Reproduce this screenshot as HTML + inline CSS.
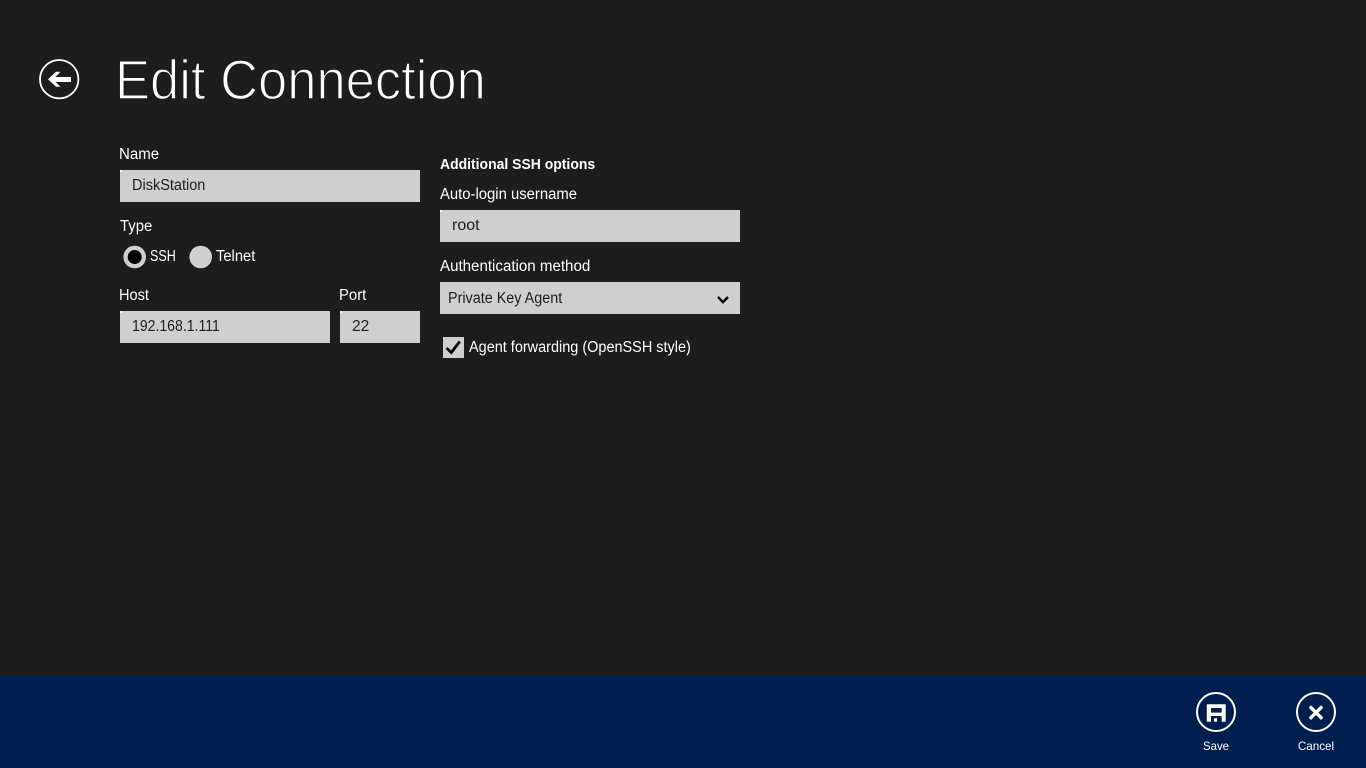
<!DOCTYPE html>
<html lang="en">
<head>
<meta charset="utf-8">
<title>Edit Connection</title>
<style>
html,body{margin:0;padding:0;width:1366px;height:768px;overflow:hidden;background:#1d1d1d;}
body{position:relative;font-family:"Liberation Sans",sans-serif;color:#fff;}
.t{position:absolute;white-space:nowrap;font-size:15.5px;line-height:20px;transform-origin:0 50%;}
.box{position:absolute;background:#cfcfcf;height:32px;}
.box.i::before{content:"";position:absolute;left:0;top:0;width:2px;height:2px;background:#f4f4f4;}
.d{color:#1d1d1d;}
#title{position:absolute;left:115px;top:45px;font-size:56px;line-height:70px;white-space:nowrap;transform-origin:0 50%;transform:scaleX(.938);color:#fff;-webkit-text-stroke:1.4px #1d1d1d;}
#bar{position:absolute;left:0;top:675px;width:1366px;height:93px;background:#001e4e;}
svg{position:absolute;overflow:visible;}
.lab{position:absolute;font-size:12px;line-height:16px;text-align:center;width:80px;}
</style>
</head>
<body>
<svg style="left:39px;top:59px" width="42" height="42" viewBox="0 0 42 42">
<circle cx="20.2" cy="20.2" r="19.2" fill="none" stroke="#fff" stroke-width="1.8"/>
<path d="M9 20.3 L17 12.8 H21.5 L16.5 18 H32 V23 H16.5 L21.5 27.8 H17 Z" fill="#fff"/>
</svg>
<div id="title">Edit Connection</div>

<div class="t" style="left:119px;top:145px;transform:scaleX(.97)">Name</div>
<div class="box i" style="left:120px;top:170px;width:300px"></div>
<div class="t d" style="left:132px;top:176px;transform:scaleX(.936)">DiskStation</div>

<div class="t" style="left:120px;top:217px;transform:scaleX(.96)">Type</div>
<svg style="left:123px;top:245px" width="24" height="24" viewBox="0 0 24 24">
<circle cx="11.7" cy="12" r="11.3" fill="#cfcfcf"/>
<circle cx="11.7" cy="12" r="7" fill="#000"/>
</svg>
<div class="t" style="left:150px;top:247px;transform:scaleX(.81)">SSH</div>
<svg style="left:189px;top:245px" width="24" height="24" viewBox="0 0 24 24">
<circle cx="11.7" cy="12" r="11.3" fill="#cfcfcf"/>
</svg>
<div class="t" style="left:216px;top:247px;transform:scaleX(.95)">Telnet</div>

<div class="t" style="left:119px;top:286px;transform:scaleX(.94)">Host</div>
<div class="box i" style="left:120px;top:311px;width:210px"></div>
<div class="t d" style="left:132px;top:317px;transform:scaleX(.907)">192.168.1.111</div>
<div class="t" style="left:339px;top:286px;transform:scaleX(.96)">Port</div>
<div class="box i" style="left:340px;top:311px;width:80px"></div>
<div class="t d" style="left:352px;top:317px">22</div>

<div class="t" style="left:440px;top:155px;font-weight:bold;font-size:14.5px;transform:scaleX(.963)">Additional SSH options</div>
<div class="t" style="left:440px;top:185px;transform:scaleX(.958)">Auto-login username</div>
<div class="box i" style="left:440px;top:210px;width:300px"></div>
<div class="t d" style="left:452px;top:216px;transform:scaleX(1.03)">root</div>
<div class="t" style="left:440px;top:257px;transform:scaleX(.974)">Authentication method</div>
<div class="box" style="left:440px;top:282px;width:300px"></div>
<div class="t d" style="left:448px;top:289px;transform:scaleX(.927)">Private Key Agent</div>
<svg style="left:717px;top:296px" width="13" height="9" viewBox="0 0 13 9">
<path d="M1 1 L6 6.2 L11 1" fill="none" stroke="#000" stroke-width="2.4"/>
</svg>
<svg style="left:443px;top:337px" width="21" height="21" viewBox="0 0 21 21">
<rect width="21" height="21" fill="#cfcfcf"/>
<path d="M3.5 11 L8.3 15.5 L16.8 4.5" fill="none" stroke="#000" stroke-width="2.8"/>
</svg>
<div class="t" style="left:469px;top:338px;transform:scaleX(.933)">Agent forwarding (OpenSSH style)</div>

<div id="bar"></div>
<svg style="left:1196px;top:692px" width="40" height="40" viewBox="0 0 40 40">
<circle cx="20" cy="20" r="19" fill="none" stroke="#fff" stroke-width="2"/>
<path fill-rule="evenodd" fill="#fff" d="M10.8 12.3 H29.7 V29.7 H10.8 Z M15 16 V20.6 H25.7 V16 Z M15 24 V29.7 H25.7 V24 Z"/>
<rect x="18" y="26.3" width="3" height="3.4" fill="#fff"/>
</svg>
<div class="lab" style="left:1176px;top:738px;transform:scaleX(.95)">Save</div>
<svg style="left:1296px;top:692px" width="40" height="40" viewBox="0 0 40 40">
<circle cx="20" cy="20" r="19" fill="none" stroke="#fff" stroke-width="2"/>
<path d="M13.8 14.4 L26.2 26.8 M26.2 14.4 L13.8 26.8" fill="none" stroke="#fff" stroke-width="3.4"/>
</svg>
<div class="lab" style="left:1276px;top:738px;transform:scaleX(.97)">Cancel</div>
</body>
</html>
